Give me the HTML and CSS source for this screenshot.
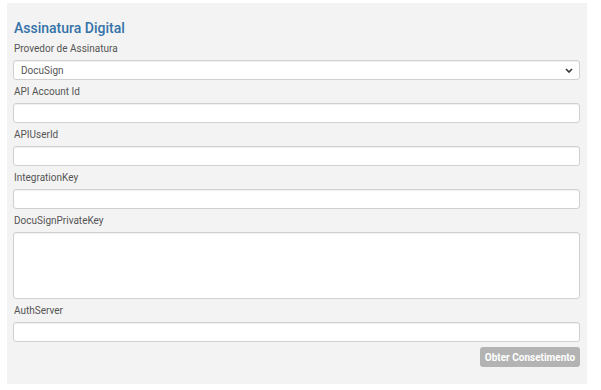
FILE: index.html
```html
<!DOCTYPE html>
<html lang="pt">
<head>
<meta charset="utf-8">
<link rel="stylesheet" href="styles.css">
</head>
<body>
<div class="panel">
  <h2 class="title">Assinatura Digital</h2>
  <div class="field">
    <label class="label">Provedor de Assinatura</label>
    <div class="select">
      <span>DocuSign</span>
      <svg class="chev" width="8" height="5" viewBox="0 0 8 5"><path d="M1 1 L4 4 L7 1" fill="none" stroke="#333" stroke-width="1.6"/></svg>
    </div>
  </div>
  <div class="field">
    <label class="label">API Account Id</label>
    <div class="input"></div>
  </div>
  <div class="field">
    <label class="label">APIUserId</label>
    <div class="input"></div>
  </div>
  <div class="field">
    <label class="label">IntegrationKey</label>
    <div class="input"></div>
  </div>
  <div class="field">
    <label class="label">DocuSignPrivateKey</label>
    <div class="input textarea"></div>
  </div>
  <div class="field">
    <label class="label">AuthServer</label>
    <div class="input"></div>
  </div>
  <div class="actions">
    <button class="btn">Obter Consetimento</button>
  </div>
</div>
</body>
</html>
```

FILE: styles.css
```css
* { box-sizing: border-box; }
body {
  margin: 0;
  background: #fff;
  font-family: Roboto, "Liberation Sans", Arial, sans-serif;
}
.panel {
  margin: 3px 0 0 7px;
  width: 580px;
  height: 381px;
  background: #f3f3f3;
  padding: 16px 7px 0 6px;
}
.title {
  margin: 0 0 5px 1px;
  font-size: 14px;
  line-height: 18px;
  font-weight: 500;
  color: #3572a8;
}
.field {
  display: flex;
  flex-direction: column;
  margin-bottom: 5px;
}
.label {
  font-size: 10px;
  line-height: 14px;
  color: #555;
  margin: 0 0 4px 1px;
}
.input, .select {
  height: 20px;
  background: #fff;
  border: 1px solid #d0d0d0;
  border-radius: 3px;
  box-shadow: inset 0 1px 1px rgba(0,0,0,0.06);
}
.select {
  display: flex;
  align-items: center;
  justify-content: space-between;
  padding: 0 6px 0 7px;
  font-size: 10px;
  color: #555;
}
.chev { display: block; }
.textarea { height: 67px; }
.actions {
  display: flex;
  justify-content: flex-end;
  margin-top: 2px;
}
.btn {
  width: 100px;
  height: 20px;
  border: none;
  border-radius: 3px;
  background: #b3b3b3;
  color: #fff;
  font-family: Roboto, "Liberation Sans", Arial, sans-serif;
  font-weight: bold;
  font-size: 10px;
  padding: 0;
}
```
